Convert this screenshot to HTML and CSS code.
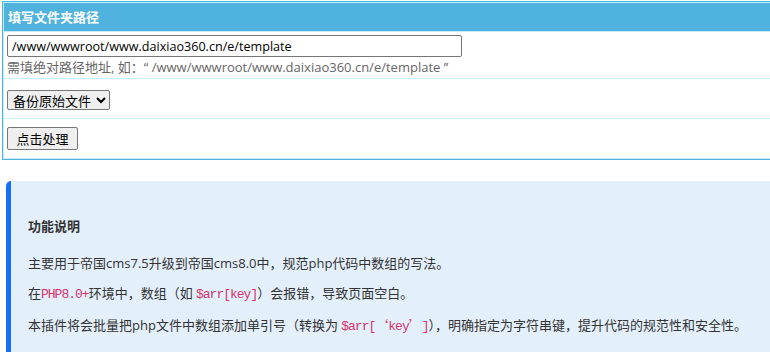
FILE: index.html
```html
<!DOCTYPE html>
<html>
<head>
  <meta charset="UTF-8">
  <title>数组键名规范化</title>
  <link rel="stylesheet" href="styles.css">
</head>
<body>
  <div class="page">
    <form class="tableborder" id="fixForm">
      <div class="header">填写文件夹路径</div>
      <div class="row">
        <input type="text" class="path" name="path" value="/www/wwwroot/www.daixiao360.cn/e/template">
        <div class="hint">需填绝对路径地址, 如：“ /www/wwwroot/www.daixiao360.cn/e/template ”</div>
      </div>
      <div class="row row-pad">
        <select name="backup" class="backup">
          <option value="1">备份原始文件</option>
          <option value="0">不备份</option>
        </select>
      </div>
      <div class="row row-pad">
        <button type="submit">点击处理</button>
      </div>
    </form>

    <div class="info">
      <h3>功能说明</h3>
      <p>主要用于帝国cms7.5升级到帝国cms8.0中，规范php代码中数组的写法。</p>
      <p>在<code>PHP8.0+</code>环境中，数组（如 <code>$arr[key]</code>）会报错，导致页面空白。</p>
      <p>本插件将会批量把php文件中数组添加单引号（转换为 <code>$arr[<span class="q">‘</span>key<span class="q">’</span>]</code>），明确指定为字符串键，提升代码的规范性和安全性。</p>
    </div>
  </div>
</body>
</html>
```

FILE: styles.css
```css
html, body {
  overflow: hidden;
}
body {
  margin: 0;
  font-family: "Open Sans", "Noto Sans CJK SC", sans-serif;
  font-size: 13px;
  color: #222;
  background: #fff;
}
.page {
  width: 800px;
}
.tableborder {
  margin: 1px 0 0 2px;
  border: 1px solid #4fb3dd;
  background: #c6ecfc;
  padding: 1px;
  display: flex;
  flex-direction: column;
  gap: 1px;
}
.header {
  background: #4fb3dd;
  color: #fff;
  font-weight: bold;
  height: 28px;
  line-height: 28px;
  padding-left: 4px;
}
.row {
  background: #fff;
  padding: 3px;
  height: 40px;
}
.row-pad {
  display: flex;
  align-items: center;
  height: 33px;
}
.path {
  box-sizing: border-box;
  width: 455px;
  height: 22px;
  border: 1px solid #767676;
  border-radius: 2px;
  padding: 0 4px;
  font: inherit;
  font-size: 12.6px;
  color: #000;
  display: block;
}
.hint {
  color: #666;
  line-height: 20px;
}
.backup {
  height: 20px;
  border: 1px solid #767676;
  border-radius: 2px;
  font: inherit;
  color: #000;
  padding: 0 1px;
  margin-top: 3px;
}
button {
  width: 71px;
  height: 23px;
  border: 1px solid #767676;
  border-radius: 2px;
  background: #efefef;
  font: inherit;
  color: #000;
  padding: 0;
}
.info {
  margin: 21px 0 0 6px;
  background: #e3f0fb;
  border-left: 5px solid #1670f5;
  border-radius: 5px 0 0 5px;
  padding: 30px 17px;
  color: #333;
}
.info h3 {
  margin: 0 0 7px;
  font-size: 13px;
  line-height: 30px;
}
.info p {
  margin: 0;
  line-height: 30px;
}
code {
  font-family: "Liberation Mono", monospace;
  font-size: 13px;
  letter-spacing: -1px;
  color: #d6336c;
}
code .q {
  display: inline-block;
  width: 13px;
  font-family: "Noto Sans CJK SC", sans-serif;
  letter-spacing: 0;
  text-align: center;
}
```
